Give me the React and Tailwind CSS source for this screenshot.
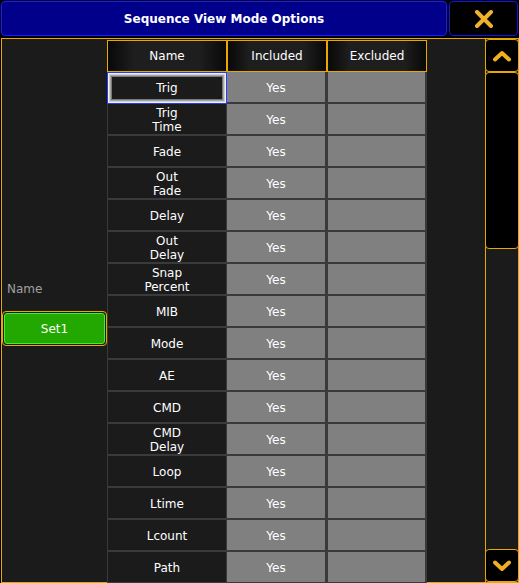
import React from 'react';

const rows = [
  'Trig', 'Trig\nTime', 'Fade', 'Out\nFade', 'Delay', 'Out\nDelay', 'Snap\nPercent', 'MIB',
  'Mode', 'AE', 'CMD', 'CMD\nDelay', 'Loop', 'Ltime', 'Lcount', 'Path',
];

const font = { fontFamily: '"DejaVu Sans", Verdana, sans-serif' };

const Chevron = ({ down }) => (
  <svg width="20" height="14" viewBox="0 0 20 14" fill="none" stroke="#f0b020" strokeWidth="4" strokeLinecap="round" strokeLinejoin="round">
    {down ? <path d="M3 3.5l7 6.5 7-6.5" /> : <path d="M3 10.5l7-6.5 7 6.5" />}
  </svg>
);

const HeaderCell = ({ children }) => (
  <div className="h-[32px] flex items-center justify-center border border-[#e8a800] bg-[linear-gradient(90deg,#080808,#1e1e1e_22%,#1e1e1e_78%,#080808)] text-[12px] text-white">
    {children}
  </div>
);

const Row = ({ label, selected }) => (
  <div className="grid grid-cols-[120px_100px_100px] h-[32px]">
    {selected ? (
      <div className="border border-[#1f3cff]">
        <div className="h-full flex items-center justify-center bg-[#1b1b1b] shadow-[inset_0_0_0_1px_#f2f2f2,inset_0_0_0_2px_#cfcfcf,inset_0_0_0_3px_#a6a6a6,inset_0_0_0_4px_#787878] text-[12px] text-white">
          {label}
        </div>
      </div>
    ) : (
      <div className="border-l border-r border-b-2 border-[#3a3a3a] bg-[#1b1b1b] flex items-center justify-center pt-px text-center whitespace-pre-line text-[12px] leading-[14px] text-white">
        {label}
      </div>
    )}
    <div className="border-r-2 border-b-2 border-[#3a3a3a] bg-[#808080] flex items-center justify-center pt-px text-[12px] text-white">
      Yes
    </div>
    <div className="border-l border-r-2 border-b-2 border-[#3a3a3a] bg-[#808080]" />
  </div>
);

export default function App() {
  return (
    <div className="w-[519px] h-[583px] bg-black overflow-hidden" style={font}>
      {/* title bar */}
      <div className="flex h-[38px] pt-px pl-px gap-[2px]">
        <div className="w-[446px] h-[35px] rounded-[4px] border border-[#1a1aff] bg-[#00008a] flex items-center justify-center text-[12px] font-bold text-white">
          Sequence View Mode Options
        </div>
        <div className="w-[69px] h-[35px] rounded-[4px] border border-[#1414e6] bg-black flex items-center justify-center">
          <svg width="20" height="18" viewBox="0 0 20 18" fill="none" stroke="#f0b030" strokeWidth="4" strokeLinecap="round">
            <path d="M3 2l14 14M17 2L3 16" />
          </svg>
        </div>
      </div>

      {/* body */}
      <div className="ml-px h-[545px] flex border-t border-l border-b border-[#e8a800] bg-[#1b1b1b]">
        {/* left panel */}
        <div className="w-[105px] flex flex-col justify-center pt-[6px]">
          <div className="h-[16px] leading-[16px] pl-[5px] text-[12px] text-[#a0a0a0] mb-[14px]">Name</div>
          <div className="h-[35px] rounded-[4px] border border-[#e8a800] p-px">
            <div className="h-full rounded-[3px] border border-[#3cf03c] bg-[#22a800] flex items-center justify-center text-[12px] text-white">
              Set1
            </div>
          </div>
        </div>

        {/* table */}
        <div className="w-[320px] pt-px">
          <div className="grid grid-cols-[120px_100px_100px]">
            <HeaderCell>Name</HeaderCell>
            <HeaderCell>Included</HeaderCell>
            <HeaderCell>Excluded</HeaderCell>
          </div>
          {rows.map((r, i) => (
            <Row key={i} label={r} selected={i === 0} />
          ))}
        </div>

        <div className="w-[58px]" />

        {/* scrollbar */}
        <div className="w-[34px] flex flex-col border-l border-r border-[#e8a800]">
          <div className="h-[33px] -mx-px rounded-[4px] border border-[#e8a800] bg-black flex items-center justify-center">
            <Chevron />
          </div>
          <div className="h-[177px] -mx-px rounded-[4px] border border-[#e8a800] bg-black" />
          <div className="flex-1" />
          <div className="h-[33px] -mx-px rounded-[4px] border border-[#e8a800] bg-black flex items-center justify-center">
            <Chevron down />
          </div>
        </div>
      </div>
    </div>
  );
}
